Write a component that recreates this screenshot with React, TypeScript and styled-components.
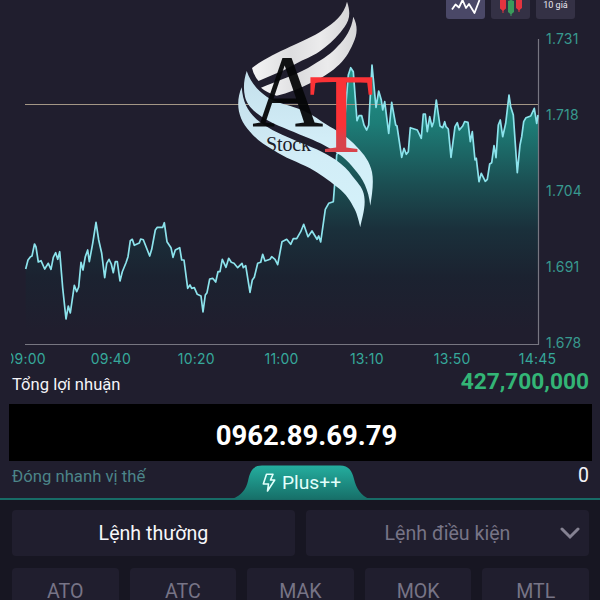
import React from "react";
import styled, { createGlobalStyle } from "styled-components";

const GlobalStyle = createGlobalStyle`
  * {
    box-sizing: border-box;
  }

  body {
    margin: 0;
    background: #201e2e;
  }
`

const Page = styled.main`
  position: relative;
  width: 600px;
  height: 600px;
  overflow: hidden;
  display: flex;
  flex-direction: column;
  background: #201e2e;
  color: #f4f4f8;
  font-family: Roboto, "Noto Sans", sans-serif;
`

const Toolbar = styled.div`
  height: 19px;
  flex: none;
  display: flex;
  justify-content: flex-end;
  gap: 6px;
  padding-right: 25px;
`

const ToolButton = styled.div<{ $active?: boolean }>`
  width: 39px;
  height: 19px;
  display: flex;
  justify-content: center;
  border-radius: 0 0 3px 3px;
  background: ${(p) => (p.$active ? "#4a4867" : "#343145")};
  font-size: 9px;
  line-height: 10px;
  color: #e9e8f0;
`

const ChartRow = styled.div`
  height: 327px;
  flex: none;
  display: flex;
`

const ChartSvg = styled.svg`
  flex: none;
  display: block;
`

const PriceAxis = styled.div`
  height: 320px;
  margin-top: 12px;
  padding-left: 6px;
  display: flex;
  flex-direction: column;
  justify-content: space-between;
  font: 14px/16px Inter, sans-serif;
  letter-spacing: 0.2px;
  color: #38998f;
`

const TimeAxis = styled.div`
  height: 26px;
  flex: none;
  width: 548px;
  margin-left: 11px;
  overflow: hidden;
  display: flex;
  align-items: center;
  font: 14px/16px Inter, sans-serif;
  letter-spacing: 0.2px;
  color: #36a89b;
`

const TimeLabel = styled.span`
  flex: 0 0 85.3px;
  text-align: center;

  &:first-child {
    margin-left: -28px;
  }
`

const LogoSvg = styled.svg`
  position: absolute;
  left: 230px;
  top: 0;
  pointer-events: none;
`

const Row = styled.div<{ $height: number }>`
  height: ${(p) => p.$height}px;
  flex: none;
  display: flex;
  align-items: center;
  justify-content: space-between;
  padding: 0 11px 0 12px;
`

const ProfitLabel = styled.span`
  font-size: 16.6px;
  line-height: 20px;
  padding-bottom: 6px;
`

const Profit = styled.span`
  font-size: 22.7px;
  font-weight: 700;
  line-height: 24px;
  padding-bottom: 12px;
  color: #33b576;
`

const PhoneBar = styled.div`
  height: 57px;
  flex: none;
  margin: 0 8px 0 9px;
  display: flex;
  align-items: center;
  justify-content: center;
  padding: 6px 0 0 12px;
  background: #000;
  color: #fff;
  font-size: 27.5px;
  font-weight: 700;
`

const CloseLabel = styled.span`
  font-size: 16.7px;
  line-height: 20px;
  padding-bottom: 5px;
  color: #4c8589;
`

const Count = styled.span`
  font-size: 19.5px;
  line-height: 20px;
  padding-bottom: 8px;
`

const PlusTab = styled.div`
  position: absolute;
  left: 232px;
  top: 465px;
  width: 138px;
  height: 34px;
  display: flex;
  align-items: center;
  gap: 6px;
  padding: 2px 0 0 30px;
  font-size: 19.2px;
  line-height: 22px;
  color: #e2fffb;
`

const TabShape = styled.svg`
  position: absolute;
  left: 0;
  top: 0;
`

const TabIcon = styled.svg`
  position: relative;
`

const TabText = styled.span`
  position: relative;
`

const OrderPanel = styled.section`
  flex: 1;
  display: flex;
  flex-direction: column;
  gap: 12px;
  padding: 10px 11px 0 12px;
  border-top: 2px solid #176b66;
  background: #171622;
`

const OrderGrid = styled.div<{ $columns: number }>`
  display: grid;
  grid-template-columns: repeat(${(p) => p.$columns}, 1fr);
  gap: 11px;
`

const OrderButton = styled.div<{ $active?: boolean }>`
  position: relative;
  height: 46px;
  display: flex;
  align-items: center;
  justify-content: center;
  border-radius: 4px;
  background: #201e2e;
  color: ${(p) => (p.$active ? "#f7f7fa" : "#777486")};
  font-size: 19.6px;
`

const Chevron = styled.svg`
  position: absolute;
  right: 9px;
  top: 17px;
`

const prices = ["1.731", "1.718", "1.704", "1.691", "1.678"]
const times = ["09:00", "09:40", "10:20", "11:00", "13:10", "13:50", "14:45"]
const orderTypes = ["ATO", "ATC", "MAK", "MOK", "MTL"]

const line = `25.7,269 28,260 30.5,256.7 32,256 34.5,244 36,247 38.3,262 41,260.7 44.7,269 48.3,263.3
51,269.3 53.3,257.3 55.7,252.7 57.7,259.3 59.7,251.7 62.7,288 66,319 68.3,306 70.3,313 74.3,285.3
76.7,291.7 78.7,287 81,262.3 83,270 85.3,256.7 87.7,250 89.3,261.7 92.7,243.3 96,222.3 98.7,240
101.7,253.3 104.7,277.7 106.7,263.3 109,259.3 111.3,264 113.3,272.7 115.3,261.7 117.3,261.7 120,281
122.3,271.7 126,262.7 128,256.7 130.3,240.7 132.3,239.3 134.3,245.3 139.3,243 140.7,239 143.3,239.7
149.7,256 151.7,249.3 155.3,230 157.3,227.3 162.7,227.3 164.3,222.7 167,241.7 171,247.7 173,257.3
175.3,250 179.7,247.7 181.7,260 184,260 187.7,288.3 190,285 191.7,288.3 194.3,287.7 197.3,294.3
201,296 203,312 205.3,295 207,292.7 209.7,279 212.7,278.3 215.7,282 218,271.7 220,271.7 222.3,259.3
226,267.3 228.7,258.3 231.3,262.3 234,263.3 237.7,267.7 242,263.3 243.3,267.7 245.7,265.7 250,292.3
252.3,280 254.3,277.3 257.7,263.3 260.7,262.3 262.7,254.3 265,261 270,259.3 271.7,256.7 275,259.3
277.7,264.7 282,241.7 286.7,239.3 290.7,244.3 293.3,238.7 296.7,238.7 300.7,231.7 303.7,224.3
308,236.7 312,231 317,239.3 318.7,236 320.7,242 325.3,209.3 328.7,203.3 333.3,201.7 335,180
336.7,155 343,140 346,103 348.3,75 350.7,67.7 353.3,71.7 357,120.7 359,115.7 361.7,115.7 364,125
366.7,130 368.7,125 372,65 376,107.3 378.7,91 381.3,100 382.7,110 384.7,101.7 388.7,133.3
391.7,102.3 395.7,125 397,126 401.7,157.3 404,148.3 406.3,154.3 408.3,151.7 410.3,127.7 417.3,130
421.3,138.3 423.3,114 425.3,114 427.3,131.7 429.7,116.7 432,126.7 433.7,121.7 436.3,100 440,126
442.7,127.7 444.7,121.7 446,126.7 448.3,129 451,157.3 455,126.7 457.3,122.7 459.3,130 462.7,126
464.7,121.5 468,122.3 470.3,141.7 472.3,131.7 475,160 476.3,158.3 479,181.7 481.3,173.3 485.3,181.3
487.3,179.3 489.7,164 491.7,162.7 494,145.7 496,157.7 498.3,125 500.3,120 502.7,136.7 505.7,123.3
509,95 510.7,106.7 513.3,115 517.3,172.7 520,145 521.7,136.7 523.7,121.7 526,117.7 530.7,116
534.3,108.3 536.7,123.3 538,115`

function PriceChart() {
  return (
    <ChartSvg width="540" height="327" viewBox="0 19 540 327">
      <defs>
        <linearGradient id="area" gradientUnits="userSpaceOnUse" x1="0" y1="65" x2="0" y2="330">
          <stop offset="0" stopColor="#22968b" />
          <stop offset="0.22" stopColor="#1d7d77" />
          <stop offset="0.45" stopColor="#1b4e52" />
          <stop offset="0.62" stopColor="#1a303b" />
          <stop offset="0.8" stopColor="#1b2230" />
          <stop offset="1" stopColor="#201e2e" />
        </linearGradient>
      </defs>
      <polygon points={`25.7,344 ${line} 538,344`} fill="url(#area)" />
      <path d="M25 104.5H538" stroke="#a39685" strokeWidth="1.2" />
      <path d="M25 344.5H538.5V39" fill="none" stroke="#777681" strokeWidth="1.2" />
      <polyline points={line} fill="none" stroke="#8ce3ec" strokeWidth="1.7" strokeLinejoin="round" />
    </ChartSvg>
  )
}

function Logo() {
  return (
    <LogoSvg width="150" height="235" viewBox="230 0 150 235">
      <defs>
        <linearGradient id="silver" x1="0" y1="0" x2="1" y2="0">
          <stop offset="0" stopColor="#f4f4f5" />
          <stop offset="0.4" stopColor="#dddddf" />
          <stop offset="0.7" stopColor="#ebebec" />
          <stop offset="1" stopColor="#d6d6d8" />
        </linearGradient>
        <linearGradient id="ice" x1="0" y1="0" x2="0" y2="1">
          <stop offset="0" stopColor="#c3dfeb" />
          <stop offset="0.5" stopColor="#d2edf7" />
          <stop offset="1" stopColor="#d4f2fa" />
        </linearGradient>
        <linearGradient id="red" gradientUnits="userSpaceOnUse" x1="0" y1="76" x2="0" y2="152">
          <stop offset="0.65" stopColor="#fb3236" />
          <stop offset="0.85" stopColor="#d8434c" />
        </linearGradient>
      </defs>
      <path
        d="M252 68C265 58 277 53 290 46.7C302 41 313 37 323 30C334 23 344 15 347 1.7C351 13 349.5 20 344.5 27C339 35 332 42 325.7 46.7C317 54 310 57 302 60.5C293 65 285 70.5 276 73.5L258.5 81Q253.5 75 252 68Z"
        fill="url(#silver)"
      />
      <path
        d="M261 87.8C276 81 299 74.5 314 64.3C324 58 331 54 337.7 46.2C346 38 351.5 29 353.3 16.7C358 26 357.5 34 353.3 43C349 53 344 61 336.7 66.7C329 74 319 79 310 83.3C299 89 288 93 276.7 95.7Q267 93 261 87.8Z"
        fill="url(#silver)"
      />
      <path
        d="M246.7 71C251 83 258 91 266.7 96.7C276 103 290 105 301.7 110C312 114 322 122 330 126.7C340 132 349 138 356.7 146.7C364 154 370 162 372 172C374 182 372 195 370.3 205.7C368.5 189 363 179 354.3 169C347 160 342 155.7 337.5 153.5C326 145.5 316 141 304 136.3C291 130.5 276 125.5 264.3 118.5C253 111 247 105 245 96.7C243 88 244 79 246.7 71Z"
        fill="url(#ice)"
      />
      <path
        d="M241.7 87.3C243 103 248 112.5 259.3 121.5C271 130.5 284 135.7 296 140.7C310 146.5 324 151.5 335.7 159.8C343 165 348 170 352.3 176C358 183 361.5 187 362.8 191C367.5 203 362 217 360.3 227.3C358 218 357 213 353.3 206.7C349 198 343 191 336.7 186.7C328 180 319 173 310 168.3C298 162 285 158 273.3 150C264 145 256 139 250 131.7C238 119 235 103 241.7 87.3Z"
        fill="url(#ice)"
      />
      <text
        x="252"
        y="126.5"
        fontFamily="Liberation Serif"
        fontSize="104"
        textLength="71.5"
        lengthAdjust="spacingAndGlyphs"
        fill="#050607"
        fillOpacity="0.95"
      >
        A
      </text>
      <text
        x="308.5"
        y="151.5"
        fontFamily="Liberation Serif"
        fontSize="114"
        textLength="65.5"
        lengthAdjust="spacingAndGlyphs"
        fill="url(#red)"
      >
        T
      </text>
      <text x="266" y="150.5" fontFamily="Liberation Serif" fontSize="20" textLength="45" fill="#1c2028">Stock</text>
    </LogoSvg>
  )
}

export default function App() {
  return (
    <Page>
      <GlobalStyle />
      <Toolbar>
        <ToolButton $active>
          <svg width="30" height="16" viewBox="0 0 30 16">
            <path
              d="M1 9.5L4.5 4.5L8 7.5L11.5 0L15 8L18 4L23.5 13L28.5 0"
              fill="none"
              stroke="#fff"
              strokeWidth="1.8"
              strokeLinejoin="round"
            />
          </svg>
        </ToolButton>
        <ToolButton>
          <svg width="24" height="16" viewBox="0 0 24 16">
            <path d="M4 0V13M20 0V12" stroke="#e2343f" strokeWidth="1" />
            <path d="M12 0V16" stroke="#3a9b5b" strokeWidth="1" />
            <path d="M1 0H7V8.5L4 11L1 8.5ZM17 0H23V8L20 10.5L17 8Z" fill="#e2343f" />
            <path d="M9 1L12 0L15 1V12L12 14.5L9 12Z" fill="#3a9b5b" />
          </svg>
        </ToolButton>
        <ToolButton>10 giá</ToolButton>
      </Toolbar>
      <ChartRow>
        <PriceChart />
        <PriceAxis>
          {prices.map((price) => (
            <span key={price}>{price}</span>
          ))}
        </PriceAxis>
      </ChartRow>
      <TimeAxis>
        {times.map((time) => (
          <TimeLabel key={time}>{time}</TimeLabel>
        ))}
      </TimeAxis>
      <Row $height={32}>
        <ProfitLabel>Tổng lợi nhuận</ProfitLabel>
        <Profit>427,700,000</Profit>
      </Row>
      <PhoneBar>0962.89.69.79</PhoneBar>
      <Row $height={37}>
        <CloseLabel>Đóng nhanh vị thế</CloseLabel>
        <Count>0</Count>
      </Row>
      <OrderPanel>
        <OrderGrid $columns={2}>
          <OrderButton $active>Lệnh thường</OrderButton>
          <OrderButton>
            Lệnh điều kiện
            <Chevron width="20" height="13" viewBox="0 0 20 13">
              <path d="M2 2L10 10L18 2" fill="none" stroke="#858292" strokeWidth="3" strokeLinecap="round" />
            </Chevron>
          </OrderButton>
        </OrderGrid>
        <OrderGrid $columns={5}>
          {orderTypes.map((type) => (
            <OrderButton key={type}>{type}</OrderButton>
          ))}
        </OrderGrid>
      </OrderPanel>
      <PlusTab>
        <TabShape width="138" height="34" viewBox="0 0 138 34">
          <defs>
            <linearGradient id="tab" x1="0" y1="0" x2="0" y2="1">
              <stop offset="0" stopColor="#24ae9f" />
              <stop offset="1" stopColor="#177069" />
            </linearGradient>
          </defs>
          <path
            d="M0 34C10 30 14 24 16 16C18 6 21 0.5 30 0.5H108C117 0.5 120 6 122 14C124 23 129 31 138 34Z"
            fill="url(#tab)"
          />
        </TabShape>
        <TabIcon width="14" height="20" viewBox="0 0 14 20">
          <path d="M4.5 1.2H11L8.5 7H12.7L5.5 18L6.5 11H1.3Z" fill="none" stroke="#e2fffb" strokeWidth="1.6" strokeLinejoin="round" />
        </TabIcon>
        <TabText>Plus++</TabText>
      </PlusTab>
      <Logo />
    </Page>
  )
}
